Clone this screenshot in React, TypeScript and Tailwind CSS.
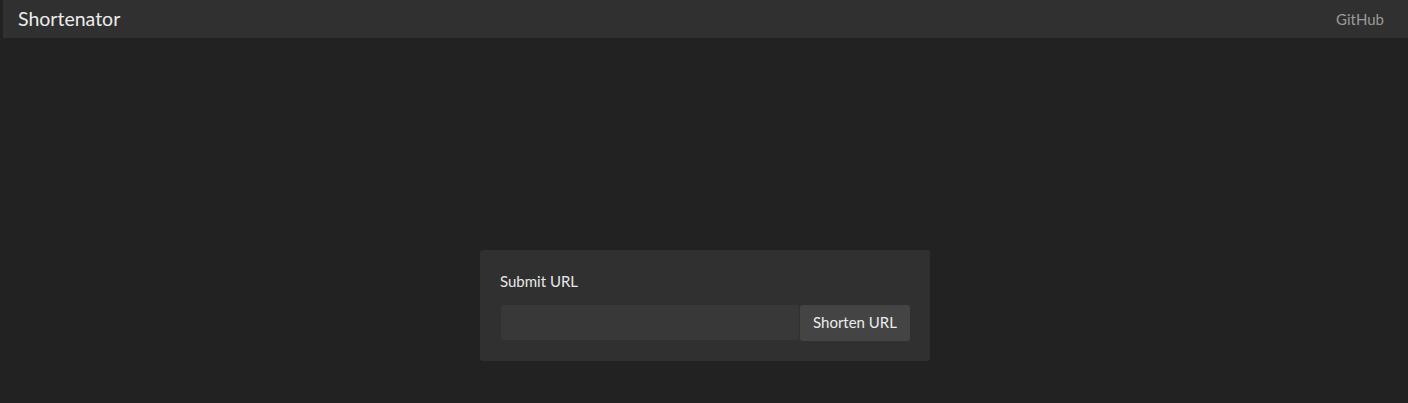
export default function App() {
  return (
    <div className="flex min-h-screen flex-col bg-[#222222] font-['Lato','Noto_Sans',sans-serif] text-[#e8e8e8]">
      <header className="ml-[3px] flex h-[38px] items-center justify-between bg-[#303030] pr-6 pl-[15px]">
        <span className="text-[19.5px] text-[#ececec]">Shortenator</span>
        <a className="text-[15px] text-[#9a9a9a]">GitHub</a>
      </header>

      <main className="flex flex-1 justify-center pt-[212px] pl-[2px]">
        <div className="h-[111px] w-[450px] rounded-[3px] bg-[#303030] px-5 pt-5">
          <p className="text-[15px] text-[#e8e8e8]">Submit URL</p>
          <form className="mt-3 flex">
            <input className="ml-[1px] h-[35px] w-[298px] rounded-[3px] bg-[#383838] px-2 text-[15px] outline-none" />
            <button
              type="button"
              className="ml-[1px] h-[36px] w-[110px] rounded-[3px] bg-[#444444] text-[15px] text-[#ececec]"
            >
              Shorten URL
            </button>
          </form>
        </div>
      </main>
    </div>
  );
}
